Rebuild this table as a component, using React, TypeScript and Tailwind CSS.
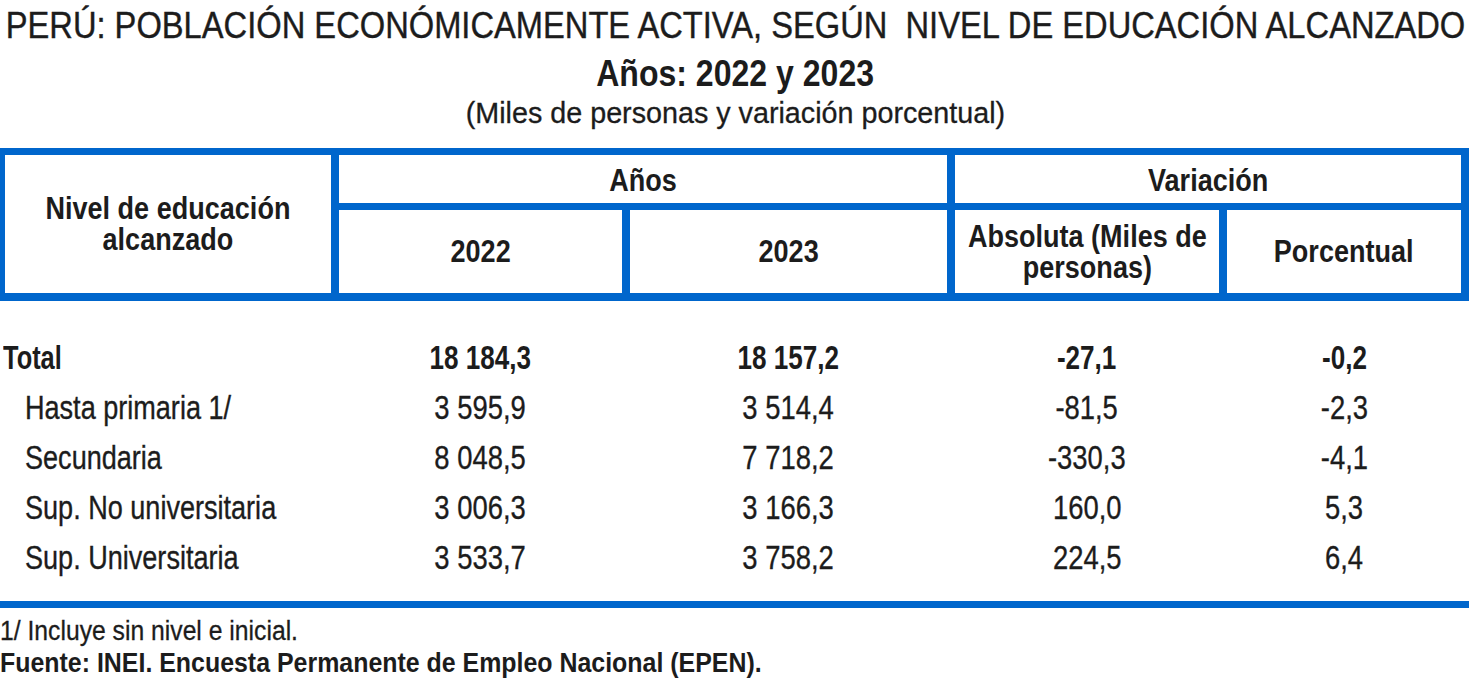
import React from 'react';

type Row = { label: string; y2022: string; y2023: string; abs: string; pct: string; total?: boolean };

const rows: Row[] = [
  { label: 'Total', y2022: '18 184,3', y2023: '18 157,2', abs: '-27,1', pct: '-0,2', total: true },
  { label: 'Hasta primaria 1/', y2022: '3 595,9', y2023: '3 514,4', abs: '-81,5', pct: '-2,3' },
  { label: 'Secundaria', y2022: '8 048,5', y2023: '7 718,2', abs: '-330,3', pct: '-4,1' },
  { label: 'Sup. No universitaria', y2022: '3 006,3', y2023: '3 166,3', abs: '160,0', pct: '5,3' },
  { label: 'Sup. Universitaria', y2022: '3 533,7', y2023: '3 758,2', abs: '224,5', pct: '6,4' },
];

// header cell text: bold, narrowed to look like Arial Narrow
function HeadText({ children }: { children: React.ReactNode }) {
  return (
    <span className="inline-block whitespace-nowrap text-center font-bold text-[32px] leading-[31px] scale-x-[0.845]">
      {children}
    </span>
  );
}

function NumCell({ value, bold }: { value: string; bold?: boolean }) {
  return (
    <div className="flex justify-center">
      <span
        className={
          bold
            ? 'inline-block whitespace-nowrap font-bold scale-x-[0.79]'
            : 'inline-block whitespace-nowrap scale-x-[0.83] [-webkit-text-stroke:0.35px]'
        }
      >
        {value}
      </span>
    </div>
  );
}

export default function App() {
  return (
    <div className="w-[1470px] h-[680px] overflow-hidden bg-white text-[#1c1c1c] font-['Liberation_Sans',Arial,sans-serif]">
      {/* Title block */}
      <div className="h-[148px]">
        <div className="flex justify-center pt-[3px] text-[37px] leading-[46px]">
          <span className="inline-block whitespace-pre scale-x-[0.883] [-webkit-text-stroke:0.4px]">
            PERÚ: POBLACIÓN ECONÓMICAMENTE ACTIVA, SEGÚN  NIVEL DE EDUCACIÓN ALCANZADO
          </span>
        </div>
        <div className="flex justify-center mt-[5px] text-[36px] leading-[40px] font-bold">
          <span className="inline-block whitespace-nowrap scale-x-[0.89]">Años: 2022 y 2023</span>
        </div>
        <div className="flex justify-center mt-[2px] text-[29px] leading-[34px]">
          <span className="inline-block whitespace-nowrap scale-x-[0.99] [-webkit-text-stroke:0.3px]">
            (Miles de personas y variación porcentual)
          </span>
        </div>
      </div>

      {/* Table header */}
      <div className="w-[1469px] bg-[#0066cc] pt-[7px] pl-[5px] pr-[8px] pb-[8px] grid grid-cols-[326px_283px_317px_264px_234px] grid-rows-[48px_83px] gap-x-[8px] gap-y-[7px]">
        <div className="row-span-2 bg-white flex items-center justify-center">
          <HeadText>
            Nivel de educación
            <br />
            alcanzado
          </HeadText>
        </div>
        <div className="col-span-2 bg-white flex items-center justify-center pt-[3px]">
          <HeadText>Años</HeadText>
        </div>
        <div className="col-span-2 bg-white flex items-center justify-center pt-[3px]">
          <HeadText>Variación</HeadText>
        </div>
        <div className="bg-white flex items-center justify-center">
          <HeadText>2022</HeadText>
        </div>
        <div className="bg-white flex items-center justify-center">
          <HeadText>2023</HeadText>
        </div>
        <div className="bg-white flex items-center justify-center">
          <HeadText>
            Absoluta (Miles de
            <br />
            personas)
          </HeadText>
        </div>
        <div className="bg-white flex items-center justify-center">
          <HeadText>Porcentual</HeadText>
        </div>
      </div>

      {/* Body rows */}
      <div className="mt-[32px]">
        {rows.map((r) => (
          <div
            key={r.label}
            className="grid grid-cols-[331px_283px_317px_264px_234px] gap-x-[8px] h-[50px] text-[33px] leading-[50px]"
          >
            <div className={r.total ? 'pl-[3px]' : 'pl-[25px]'}>
              <span
                className={
                  r.total
                    ? 'inline-block whitespace-nowrap origin-left font-bold scale-x-[0.77]'
                    : 'inline-block whitespace-nowrap origin-left scale-x-[0.82] [-webkit-text-stroke:0.35px]'
                }
              >
                {r.label}
              </span>
            </div>
            <NumCell value={r.y2022} bold={r.total} />
            <NumCell value={r.y2023} bold={r.total} />
            <NumCell value={r.abs} bold={r.total} />
            <NumCell value={r.pct} bold={r.total} />
          </div>
        ))}
      </div>

      {/* Bottom rule */}
      <div className="mt-[18px] h-[7px] w-[1469px] bg-[#0066cc]" />

      {/* Notes */}
      <div className="mt-[7px] text-[27px] leading-[32px]">
        <div>
          <span className="inline-block whitespace-nowrap origin-left scale-x-[0.915] [-webkit-text-stroke:0.3px]">
            1/ Incluye sin nivel e inicial.
          </span>
        </div>
        <div>
          <span className="inline-block whitespace-nowrap origin-left font-bold scale-x-[0.923]">
            Fuente: INEI. Encuesta Permanente de Empleo Nacional (EPEN).
          </span>
        </div>
      </div>
    </div>
  );
}
